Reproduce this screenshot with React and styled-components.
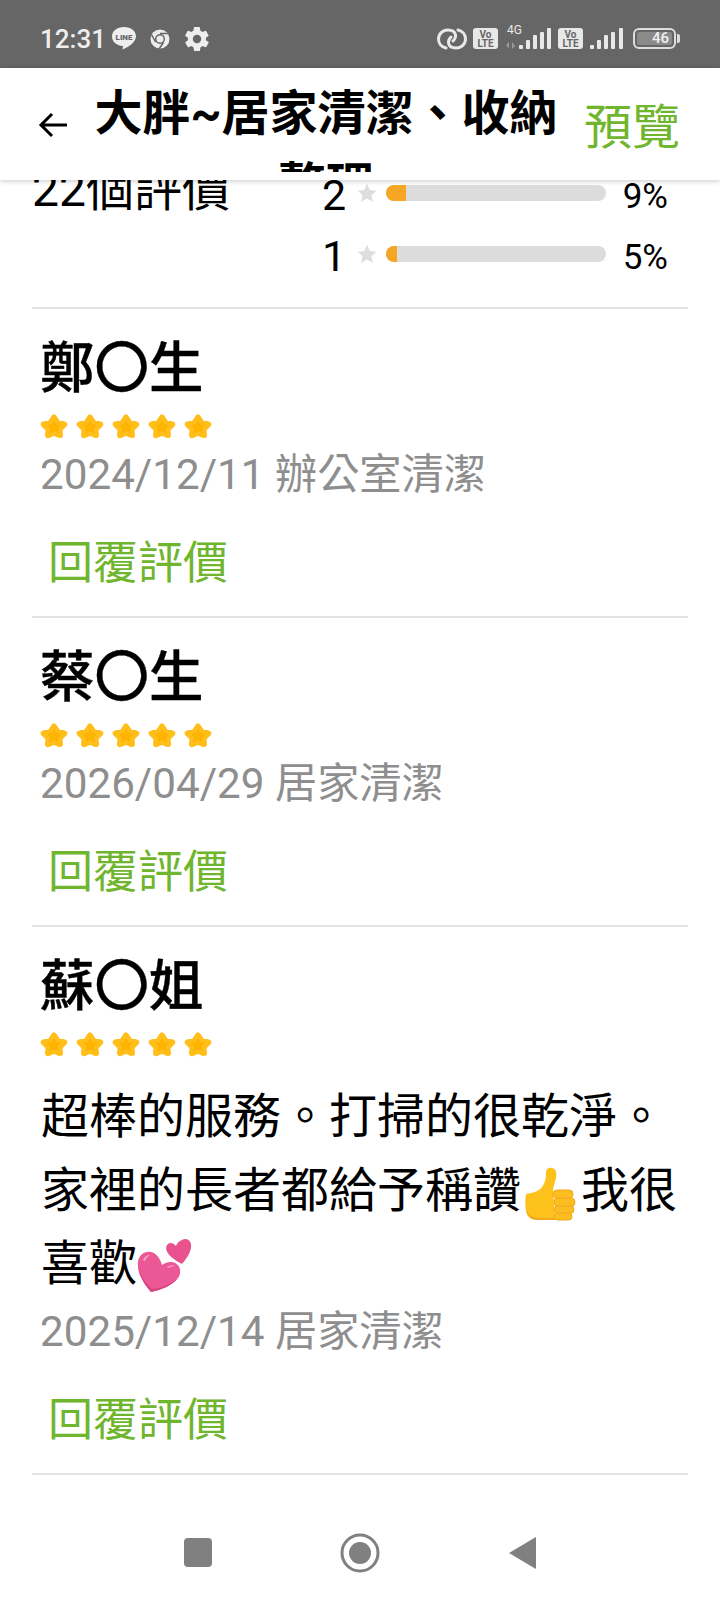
import React from 'react';
import styled, { createGlobalStyle } from 'styled-components';

const GlobalStyle = createGlobalStyle`
  html, body {
    margin: 0;
    padding: 0;
    background: #fff;
  }
  body {
    font-family: Roboto, "Noto Sans CJK TC", sans-serif;
  }
`;

const Phone = styled.div`
  width: 720px;
  height: 1600px;
  display: flex;
  flex-direction: column;
  overflow: hidden;
  background: #fff;
`;

const StatusBar = styled.div`
  height: 68px;
  flex: none;
  display: flex;
  align-items: center;
  justify-content: space-between;
  padding: 0 44px 0 40px;
  background: #666;
  color: #eee;
`;

const StatusGroup = styled.div`
  display: flex;
  align-items: center;
  margin-top: 9px;
`;

const Clock = styled.span`
  font-size: 26px;
  font-weight: 500;
  line-height: 30px;
  width: 71px;
`;

const Spacer = styled.span`
  width: ${(p) => p.$w}px;
  flex: none;
`;

const VoLte = styled.span`
  width: 25px;
  height: 21px;
  border-radius: 3px;
  background: #e8e8e8;
  color: #666;
  font-size: 10px;
  font-weight: 700;
  line-height: 9px;
  text-align: center;
  display: flex;
  flex-direction: column;
  justify-content: center;
`;

const FourG = styled.div`
  position: relative;
  width: 46px;
  height: 22px;
`;

const FourGLabel = styled.span`
  position: absolute;
  left: 2px;
  top: -4px;
  font-size: 12px;
  line-height: 13px;
  color: #e8e8e8;
`;

const FourGBars = styled.svg`
  position: absolute;
  left: 0;
  top: 0;
`;

const Battery = styled.div`
  width: 43px;
  height: 21px;
  box-sizing: border-box;
  border: 2px solid #ddd;
  border-radius: 6px;
  padding: 2px;
  display: flex;
  position: relative;
`;

const BatteryFill = styled.div`
  flex: 1;
  border-radius: 2px;
  background: #8a8a8a;
  color: #f0f0f0;
  font-size: 15px;
  font-weight: 500;
  line-height: 13px;
  text-align: right;
  padding-right: 3px;
`;

const BatteryNub = styled.span`
  position: absolute;
  right: -6px;
  top: 4px;
  width: 3px;
  height: 9px;
  border-radius: 0 2px 2px 0;
  background: #ddd;
`;

const AppBar = styled.header`
  height: 112px;
  flex: none;
  display: flex;
  align-items: flex-start;
  overflow: hidden;
  background: #fff;
  box-shadow: 0 1px 5px rgba(0, 0, 0, 0.22);
  position: relative;
  z-index: 2;
`;

const BackButton = styled.button`
  border: 0;
  padding: 0;
  background: none;
  width: 31px;
  height: 30px;
  margin: 42px 0 0 38px;
  flex: none;
`;

const Title = styled.h1`
  margin: 10px 0 0 24px;
  width: 466px;
  height: 94px;
  overflow: hidden;
  flex: none;
  font-size: 48px;
  font-weight: 700;
  line-height: 72px;
  text-align: center;
  color: #000;
`;

const Preview = styled.span`
  font-size: 48px;
  line-height: 70px;
  margin: 25px 0 0 25px;
  color: #6fb52d;
  white-space: nowrap;
`;

const Scroller = styled.main`
  flex: 1;
  min-height: 0;
  overflow: hidden;
`;

const Summary = styled.section`
  display: flex;
  margin: -18px 32px 0;
  padding-bottom: 23px;
  border-bottom: 2px solid #e2e2e2;
`;

const ReviewCount = styled.div`
  width: 290px;
  flex: none;
  font-size: 48px;
  line-height: 56px;
  color: #000;
`;

const Breakdown = styled.div`
  display: flex;
  flex-direction: column;
`;

const BreakdownRow = styled.div`
  height: 61px;
  display: flex;
  align-items: center;
  color: #000;
`;

const RowNumber = styled.span`
  width: 35px;
  font-size: 43px;
  line-height: 48px;
  margin-top: 5px;
`;

const GreyStar = styled.svg`
  width: 20px;
  height: 20px;
  flex: none;
`;

const BarTrack = styled.div`
  width: 220px;
  height: 16px;
  margin-left: 9px;
  border-radius: 8px;
  overflow: hidden;
  background: #dcdcdc;
`;

const BarFill = styled.div`
  height: 100%;
  background: #f5a623;
`;

const Percent = styled.span`
  width: 62px;
  text-align: right;
  font-size: 35px;
  line-height: 40px;
  margin-top: 8px;
`;

const Review = styled.article`
  margin: 0 32px;
  padding-top: 22px;
  border-bottom: 2px solid #e2e2e2;
`;

const Name = styled.div`
  font-size: 54.5px;
  font-weight: 500;
  -webkit-text-stroke: 0.4px #000;
  line-height: 74px;
  color: #000;
  margin-left: 8px;
`;

const Stars = styled.div`
  display: flex;
  gap: 8px;
  margin: 9px 0 7px 8px;
`;

const Comment = styled.p`
  margin: 22px 0 3px 9px;
  font-size: 48px;
  line-height: 73.5px;
  color: #000;
  width: 640px;
`;

const Emoji = styled.svg`
  width: ${(p) => p.$size}px;
  height: ${(p) => p.$size}px;
  vertical-align: ${(p) => p.$drop}px;
`;

const DateLine = styled.div`
  font-size: 42.2px;
  line-height: 56px;
  color: #8e8e8e;
  margin-left: 8px;
`;

const ReplyLink = styled.a`
  display: block;
  font-size: 45px;
  line-height: 60px;
  color: #6fb52d;
  margin: 31px 0 22px 16px;
`;

const NavBar = styled.nav`
  height: 124px;
  flex: none;
  display: flex;
  align-items: center;
  justify-content: center;
  gap: 122px;
  padding-top: 30px;
  box-sizing: border-box;
  background: #fff;
`;

const NavIcon = styled.svg`
  width: 40px;
  height: 40px;
  display: block;
`;

function ThumbsUp() {
  return (
    <Emoji $size={60} $drop={-16} viewBox="0 0 60 60">
      <path
        d="M5 31c7-1 13-3 16-7 4-5 4-11 4-15 0-3 3-5 6-4 4 1 5 5 4 10-1 5-3 9-3 12l2 30H17c-7 0-11-3-12-9-1-6-1-12 0-17z"
        fill="#fcc21b"
      />
      <path d="M5 47c1 6 5 10 12 10h17v-2H20c-8 0-13-3-15-8z" fill="#f4a81f" />
      <rect x="32" y="27" width="20" height="8.500" rx="4" fill="#fbbd20" stroke="#f4a81f" />
      <rect x="33" y="35" width="21" height="8.500" rx="4" fill="#fbbd20" stroke="#f4a81f" />
      <rect x="33" y="43" width="20" height="7.500" rx="3.700" fill="#fbbd20" stroke="#f4a81f" />
      <rect x="33" y="50" width="18" height="7" rx="3.500" fill="#fbbd20" stroke="#f4a81f" />
    </Emoji>
  );
}

function Hearts() {
  return (
    <Emoji $size={56} $drop={-14} viewBox="0 0 56 56">
      <path
        d="M39 8C36 4 31 4 29.500 8c-2 5 3.500 12 15.500 18 5-6 10-13 9-20-1-5-6-6-9-4-3 1-5 3-6 6z"
        fill="#e9528f"
      />
      <path
        d="M25 27c-3-10-9-14-15-13C3 15 0 22 1 29c1 9 7 18 13 25 10-2 22-7 27-14 5-7 1-15-6-16-4-.5-8 1-10 3z"
        fill="#ec5796"
      />
      <path d="M6 22c1-3 4-5 7-5-2 1-4 3-5 6z" fill="#f8a9c8" />
      <path d="M30 29c2-1 5-2 8-1-2 0-5 1-7 2z" fill="#f8a9c8" />
      <path d="M1 29c1 9 7 18 13 25 10-2 22-7 27-14-8 7-17 10-26 11C8 45 3 37 1 29z" fill="#d9417f" />
    </Emoji>
  );
}

function GoldStar() {
  return (
    <svg width="28" height="26" viewBox="0 0 28 26">
      <path
        d="M14 3.500l3.300 5.200 7 1.600-4.900 4.700.6 6.100-6-2.300-6 2.300.6-6.100-4.900-4.700 7-1.600z"
        fill="#ffbe1a"
        stroke="#ffbe1a"
        strokeWidth="6"
        strokeLinejoin="round"
      />
      <path d="M14 6l2.200 4.300 4.800.7-3.400 3.400.8 4.800-4.400-2.200-4.400 2.200.8-4.800L7 11l4.800-.7z" fill="#fdb300" />
    </svg>
  );
}

function LineIcon() {
  return (
    <svg width="26" height="25" viewBox="0 0 26 25">
      <path d="M13 1C6 1 1 5 1 10.500c0 5 4 9 11 9.500 0 1-.5 2.500-.5 3.500 4-1.500 13-6 13.500-13C25 5 20 1 13 1z" fill="#eee" />
      <text x="13" y="14" fontSize="8" fontWeight="900" textAnchor="middle" fill="#666" fontFamily="Roboto">LINE</text>
    </svg>
  );
}

function ChromeIcon() {
  return (
    <svg width="22" height="22" viewBox="0 0 22 22" fill="none">
      <circle cx="11" cy="11" r="9.500" fill="#eee" />
      <circle cx="11" cy="11" r="5" fill="#666" />
      <circle cx="11" cy="11" r="3.500" fill="#eee" />
      <path d="M11 5.500h9M6.500 14l-4-7.500M14.500 14.500L10 21" stroke="#666" strokeWidth="1.500" />
    </svg>
  );
}

function GearIcon() {
  return (
    <svg width="24" height="24" viewBox="2 2 20 20">
      <path
        d="M19.400 13c.1-.3.100-.7.100-1s0-.7-.1-1l2.100-1.600c.2-.2.200-.4.100-.6l-2-3.500c-.1-.2-.4-.3-.6-.2l-2.500 1c-.5-.4-1.100-.7-1.700-1l-.4-2.700c0-.2-.2-.4-.5-.4h-4c-.3 0-.5.200-.5.400l-.4 2.700c-.6.300-1.200.6-1.700 1l-2.500-1c-.2-.1-.5 0-.6.200l-2 3.500c-.1.200-.1.400.1.600L4.500 11c0 .3-.1.700-.1 1s0 .7.1 1l-2.100 1.600c-.2.200-.2.400-.1.600l2 3.500c.1.200.4.300.6.200l2.500-1c.5.400 1.100.7 1.700 1l.4 2.700c0 .2.200.4.500.4h4c.3 0 .5-.2.500-.4l.4-2.700c.6-.3 1.200-.6 1.700-1l2.500 1c.2.1.5 0 .6-.2l2-3.500c.1-.2.100-.4-.1-.6L19.400 13zM12 15.500a3.500 3.500 0 1 1 0-7 3.500 3.500 0 0 1 0 7z"
        fill="#eee"
      />
    </svg>
  );
}

function LinkIcon() {
  return (
    <svg width="30" height="22" viewBox="0 0 30 22" fill="none" stroke="#e8e8e8" strokeWidth="3" strokeLinecap="round">
      <path d="M9 20C4 19 1.500 15 1.500 11c0-5 4-9 9.500-9 4 0 7 2 7.500 5 .3 2-.5 4-2.500 6" />
      <path d="M21 2c5 1 7.500 5 7.500 9 0 5-4 9-9.500 9-4 0-7-2-7.500-5-.3-2 .5-4 2.500-6" />
    </svg>
  );
}

function SignalBars() {
  const bars = [
    [0, 17, 4],
    [7, 12, 9],
    [14, 7, 14],
    [21, 4, 17],
    [29, 0, 21],
  ];
  return (
    <svg width="33" height="22" viewBox="0 0 33 22">
      {bars.map(([x, y, h]) => (
        <rect key={x} x={x} y={y} width="4" height={h} rx="1" fill="#e8e8e8" />
      ))}
    </svg>
  );
}

const reviews = [
  { name: '鄭〇生', date: '2024/12/11 辦公室清潔' },
  { name: '蔡〇生', date: '2026/04/29 居家清潔' },
  {
    name: '蘇〇姐',
    date: '2025/12/14 居家清潔',
    comment: (
      <>
        超棒的服務。打掃的很乾淨。家裡的長者都給予稱讚<ThumbsUp />我很喜歡<Hearts />
      </>
    ),
  },
];

const breakdown = [
  { stars: 2, percent: 9 },
  { stars: 1, percent: 5 },
];

function App() {
  return (
    <Phone>
      <GlobalStyle />
      <StatusBar>
        <StatusGroup>
          <Clock>12:31</Clock>
          <LineIcon />
          <Spacer $w={12} />
          <ChromeIcon />
          <Spacer $w={14} />
          <GearIcon />
        </StatusGroup>
        <StatusGroup>
          <LinkIcon />
          <Spacer $w={6} />
          <VoLte><span>Vo</span><span>LTE</span></VoLte>
          <Spacer $w={7} />
          <FourG>
            <FourGLabel>4G</FourGLabel>
            <FourGBars width="46" height="22" viewBox="0 0 46 22">
              <path d="M1 17l3-3v7zM7 14v7l3-3z" fill="#999" />
              {[[14, 17, 4], [21, 12, 9], [28, 7, 14], [35, 4, 17], [42, 0, 21]].map(([x, y, h]) => (
                <rect key={x} x={x} y={y} width="4" height={h} rx="1" fill="#e8e8e8" />
              ))}
            </FourGBars>
          </FourG>
          <Spacer $w={7} />
          <VoLte><span>Vo</span><span>LTE</span></VoLte>
          <Spacer $w={7} />
          <SignalBars />
          <Spacer $w={10} />
          <Battery>
            <BatteryFill>46</BatteryFill>
            <BatteryNub />
          </Battery>
        </StatusGroup>
      </StatusBar>

      <AppBar>
        <BackButton aria-label="back">
          <svg width="31" height="30" viewBox="0 0 31 30" fill="none" stroke="#000" strokeWidth="3">
            <path d="M29 15H3M14 4L3 15l11 11" />
          </svg>
        </BackButton>
        <Title>大胖~居家清潔、收納整理</Title>
        <Preview>預覽</Preview>
      </AppBar>

      <Scroller>
        <Summary>
          <ReviewCount>22個評價</ReviewCount>
          <Breakdown>
            {breakdown.map((row) => (
              <BreakdownRow key={row.stars}>
                <RowNumber>{row.stars}</RowNumber>
                <GreyStar viewBox="0 0 24 24">
                  <path d="M12 1l3.400 7.500 7.900.8-5.900 5.400 1.700 8L12 18.600 4.900 22.700l1.700-8L.7 9.300l7.900-.8z" fill="#dedede" />
                </GreyStar>
                <BarTrack>
                  <BarFill style={{ width: `${row.percent}%` }} />
                </BarTrack>
                <Percent>{row.percent}%</Percent>
              </BreakdownRow>
            ))}
          </Breakdown>
        </Summary>

        {reviews.map((review) => (
          <Review key={review.name}>
            <Name>{review.name}</Name>
            <Stars>
              {[1, 2, 3, 4, 5].map((n) => <GoldStar key={n} />)}
            </Stars>
            {review.comment && <Comment>{review.comment}</Comment>}
            <DateLine>{review.date}</DateLine>
            <ReplyLink>回覆評價</ReplyLink>
          </Review>
        ))}
      </Scroller>

      <NavBar>
        <NavIcon viewBox="0 0 40 40">
          <rect x="6" y="5" width="28" height="29" rx="4" fill="#808080" />
        </NavIcon>
        <NavIcon viewBox="0 0 40 40">
          <circle cx="20" cy="20" r="18" fill="none" stroke="#808080" strokeWidth="3" />
          <circle cx="20" cy="20" r="11" fill="#808080" />
        </NavIcon>
        <NavIcon viewBox="0 0 40 40">
          <path d="M7 20L33 4.500c1-.5 1 0 1 1v29c0 1 0 1.500-1 1z" fill="#808080" />
        </NavIcon>
      </NavBar>
    </Phone>
  );
}

export default App;
